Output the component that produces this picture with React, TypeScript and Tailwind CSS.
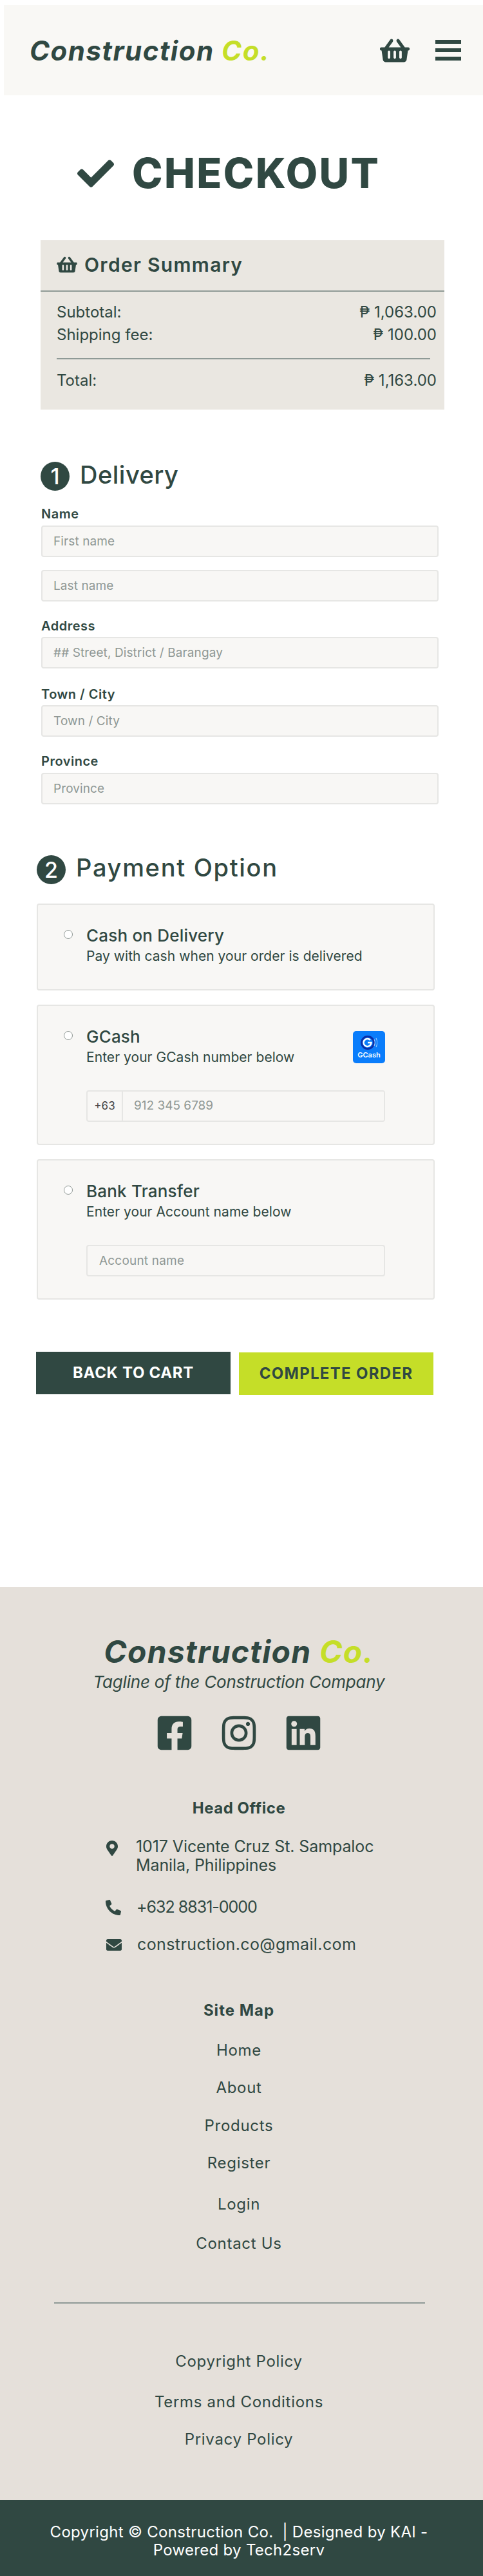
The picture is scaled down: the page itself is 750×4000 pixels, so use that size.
import {
  FaCheck,
  FaEnvelope,
  FaFacebookSquare,
  FaInstagram,
  FaLinkedin,
  FaMapMarkerAlt,
  FaPhoneAlt,
  FaShoppingBasket,
} from "react-icons/fa";

const dark = "text-[#304842]";
const labelClass = `block h-[22px] text-[20px] leading-[22px] font-semibold tracking-[0.5px] ${dark}`;
const inputClass =
  "block h-[49px] w-[617px] rounded-[4px] border-2 border-[#e6e6e4] bg-[#f8f7f5] px-[17px] text-[19px] tracking-[0.1px] outline-none placeholder:text-[#8f9794]";
const payInputClass =
  "block h-[49px] rounded-[4px] border-2 border-[#e6e6e4] bg-[#f8f7f5] text-[19px] tracking-[0.2px] outline-none placeholder:text-[#8f9794]";
const titleClass = `text-[26px] leading-[32px] font-medium tracking-[0.2px] ${dark}`;
const descClass = `text-[21px] leading-[32px] tracking-[0.05px] ${dark}`;
const summaryRow = `flex h-[35px] items-center justify-between text-[24px] ${dark}`;
const linkClass = `text-[24px] leading-[30px] tracking-[0.7px] ${dark}`;

function Step({ n, label, className }: { n: number; label: string; className: string }) {
  return (
    <div className="flex h-[45px] items-center gap-[16px]">
      <div className="flex h-[45px] w-[45px] items-center justify-center rounded-full bg-[#304842] text-[34px] font-medium text-white">
        {n}
      </div>
      <h2 className={`text-[38px] font-medium ${dark} ${className}`}>{label}</h2>
    </div>
  );
}

function GcashLogo() {
  return (
    <div className="mt-[7px] flex h-[50px] w-[50px] flex-col items-center rounded-[5px] bg-[#0a7dfb] pt-[6px]">
      <svg width="26" height="24" viewBox="0 0 26 24" fill="none">
        <circle cx="11" cy="12" r="9.5" stroke="#0b2fa8" strokeWidth="3" />
        <path d="M15 8a6 6 0 1 0 1.5 4H11" stroke="#fff" strokeWidth="2.5" />
        <path d="M21 7c1.5 3 1.5 7 0 10M24 5c2 4 2 10 0 14" stroke="#9cc8fb" strokeWidth="1.2" />
      </svg>
      <span className="text-[11px] leading-[14px] font-semibold text-white">GCash</span>
    </div>
  );
}

function PayCard({
  title,
  desc,
  logo,
  className,
  children,
}: {
  title: string;
  desc: string;
  logo?: boolean;
  className: string;
  children?: React.ReactNode;
}) {
  return (
    <div className={`ml-[57px] flex w-[618px] items-start rounded-[4px] border-2 border-[#e6e6e4] bg-[#f8f7f5] pt-[32px] pl-[40px] ${className}`}>
      <input type="radio" name="pay" className="mt-[7px] h-[14px] w-[14px] appearance-none rounded-full border border-[#8f9794] bg-white" />
      <div className="ml-[21px] w-[464px]">
        <div className="flex items-start justify-between">
          <div>
            <p className={titleClass}>{title}</p>
            <p className={descClass}>{desc}</p>
          </div>
          {logo && <GcashLogo />}
        </div>
        {children}
      </div>
    </div>
  );
}

export default function App() {
  return (
    <div className="h-[4000px] overflow-hidden bg-white font-['Inter',sans-serif]">
      <header className="mt-[8px] ml-[6px] flex h-[140px] items-center justify-between bg-[#f9f8f5] pr-[34px] pl-[40px]">
        <p className={`text-[42px] font-bold italic tracking-[1.5px] ${dark}`}>
          Construction <span className="text-[#c5de28]">Co.</span>
        </p>
        <div className="flex items-center gap-[40px]">
          <FaShoppingBasket className={`h-[41px] w-[46px] ${dark}`} />
          <div className="flex flex-col gap-[7px]">
            <div className="h-[6px] w-[40px] bg-[#304842]" />
            <div className="h-[6px] w-[40px] bg-[#304842]" />
            <div className="h-[6px] w-[40px] bg-[#304842]" />
          </div>
        </div>
      </header>

      <h1 className={`mt-[76px] flex h-[90px] items-center gap-[28px] pl-[120px] text-[64px] font-extrabold tracking-[2.4px] ${dark}`}>
        <FaCheck className="h-[57px] w-[57px]" />
        CHECKOUT
      </h1>

      <section className="mt-[59px] ml-[63px] h-[263px] w-[627px] bg-[#eae7e1]">
        <div className="flex h-[80px] items-center gap-[11px] border-b-2 border-[#8f9a96] pb-[2px] pl-[25px]">
          <FaShoppingBasket className={`h-[28px] w-[32px] ${dark}`} />
          <h3 className={`text-[30px] font-semibold tracking-[1.3px] ${dark}`}>Order Summary</h3>
        </div>
        <div className="pt-[14px] pr-[12px] pl-[25px]">
          <div className={summaryRow}><span>Subtotal:</span><span>₱ 1,063.00</span></div>
          <div className={summaryRow}><span>Shipping fee:</span><span>₱ 100.00</span></div>
          <div className="mt-[19px] h-[2px] w-[580px] bg-[#8f9a96]" />
          <div className={`mt-[15px] ${summaryRow}`}><span>Total:</span><span>₱ 1,163.00</span></div>
        </div>
      </section>

      <section className="mt-[81px] ml-[63px]">
        <Step n={1} label="Delivery" className="pb-[4px] tracking-[0.5px]" />
        <form className="pl-[1px]">
          <label className={`mt-[25px] ${labelClass}`}>Name</label>
          <input className={`mt-[7px] ${inputClass}`} placeholder="First name" />
          <input className={`mt-[20px] ${inputClass}`} placeholder="Last name" />
          <label className={`mt-[27px] ${labelClass}`}>Address</label>
          <input className={`mt-[6px] ${inputClass}`} placeholder="## Street, District / Barangay" />
          <label className={`mt-[29px] ${labelClass}`}>Town / City</label>
          <input className={`mt-[6px] ${inputClass}`} placeholder="Town / City" />
          <label className={`mt-[27px] ${labelClass}`}>Province</label>
          <input className={`mt-[7px] ${inputClass}`} placeholder="Province" />
        </form>
      </section>

      <section className="mt-[79px]">
        <div className="ml-[57px]">
          <Step n={2} label="Payment Option" className="pb-[6px] tracking-[1.7px]" />
        </div>
        <PayCard className="mt-[30px] h-[135px]" title="Cash on Delivery" desc="Pay with cash when your order is delivered" />
        <PayCard className="mt-[22px] h-[218px]" title="GCash" desc="Enter your GCash number below" logo>
          <div className="mt-[35px] flex h-[49px] overflow-hidden rounded-[4px] border-2 border-[#e6e6e4]">
            <span className="flex w-[55px] items-center justify-center border-r-2 border-[#e6e6e4] text-[17px] text-[#444]">+63</span>
            <input className="min-w-0 flex-1 bg-[#f8f7f5] pl-[17px] text-[19px] outline-none placeholder:text-[#8f9794]" placeholder="912 345 6789" />
          </div>
        </PayCard>
        <PayCard className="mt-[22px] h-[218px]" title="Bank Transfer" desc="Enter your Account name below">
          <input className={`mt-[35px] w-[464px] px-[18px] ${payInputClass}`} placeholder="Account name" />
        </PayCard>
      </section>

      <div className="mt-[81px] ml-[56px] flex items-start gap-[13px]">
        <button className="h-[66px] w-[302px] bg-[#304842] text-[24px] font-bold tracking-[0.7px] text-white">BACK TO CART</button>
        <button className={`mt-[1px] h-[66px] w-[302px] bg-[#c5de28] text-[24px] font-bold tracking-[1.3px] ${dark}`}>COMPLETE ORDER</button>
      </div>

      <footer className="mt-[298px] h-[1418px] bg-[#e5e0da] pt-[71px]">
        <div className="w-[742px] text-center">
          <p className={`text-[48px] leading-[60px] font-bold italic tracking-[1.25px] ${dark}`}>
            Construction <span className="text-[#c5de28]">Co.</span>
          </p>
          <p className={`text-[26px] leading-[34px] tracking-[-0.2px] italic ${dark}`}>Tagline of the Construction Company</p>
          <div className={`mt-[32px] flex justify-center gap-[40px] ${dark}`}>
            <FaFacebookSquare className="h-[60px] w-[60px]" />
            <FaInstagram className="h-[60px] w-[60px]" />
            <FaLinkedin className="h-[60px] w-[60px]" />
          </div>
          <h4 className={`mt-[72px] text-[24px] leading-[30px] font-bold tracking-[0.5px] ${dark}`}>Head Office</h4>
        </div>

        <div className={`ml-[164px] text-[25px] ${dark}`}>
          <div className="mt-[30px] flex items-start">
            <FaMapMarkerAlt className="mt-[5px] ml-[1px] h-[24px] w-[18px] shrink-0" />
            <p className="ml-[28px] leading-[29px] tracking-[-0.1px]">
              1017 Vicente Cruz St. Sampaloc
              <br />
              Manila, Philippines
            </p>
          </div>
          <div className="mt-[39px] flex h-[24px] items-center gap-[24px]">
            <FaPhoneAlt className="h-[24px] w-[24px]" />
            <span className="tracking-[-1px]">+632 8831-0000</span>
          </div>
          <div className="mt-[34px] flex h-[24px] items-center gap-[24px] pl-[1px]">
            <FaEnvelope className="h-[24px] w-[24px]" />
            <span className="tracking-[0.4px]">construction.co@gmail.com</span>
          </div>
        </div>

        <nav className="w-[742px] text-center">
          <h4 className={`mt-[75px] text-[24px] leading-[30px] font-bold tracking-[1px] ${dark}`}>Site Map</h4>
          <p className={`mt-[32px] ${linkClass}`}>Home</p>
          <p className={`mt-[28px] ${linkClass}`}>About</p>
          <p className={`mt-[29px] ${linkClass}`}>Products</p>
          <p className={`mt-[28px] ${linkClass}`}>Register</p>
          <p className={`mt-[34px] ${linkClass}`}>Login</p>
          <p className={`mt-[31px] ${linkClass}`}>Contact Us</p>
          <div className="mt-[76px] ml-[84px] h-[2px] w-[576px] bg-[#8f9a96]" />
          <p className={`mt-[75px] ${linkClass}`}>Copyright Policy</p>
          <p className={`mt-[33px] ${linkClass}`}>Terms and Conditions</p>
          <p className={`mt-[28px] ${linkClass}`}>Privacy Policy</p>
        </nav>
      </footer>

      <div className="h-[118px] w-full bg-[#304842] pt-[36px] pr-[8px] text-center text-[24px] leading-[28px] tracking-[0.3px] text-white">
        Copyright © Construction Co. &nbsp;| Designed by KAI -
        <br />
        Powered by Tech2serv
      </div>
    </div>
  );
}
